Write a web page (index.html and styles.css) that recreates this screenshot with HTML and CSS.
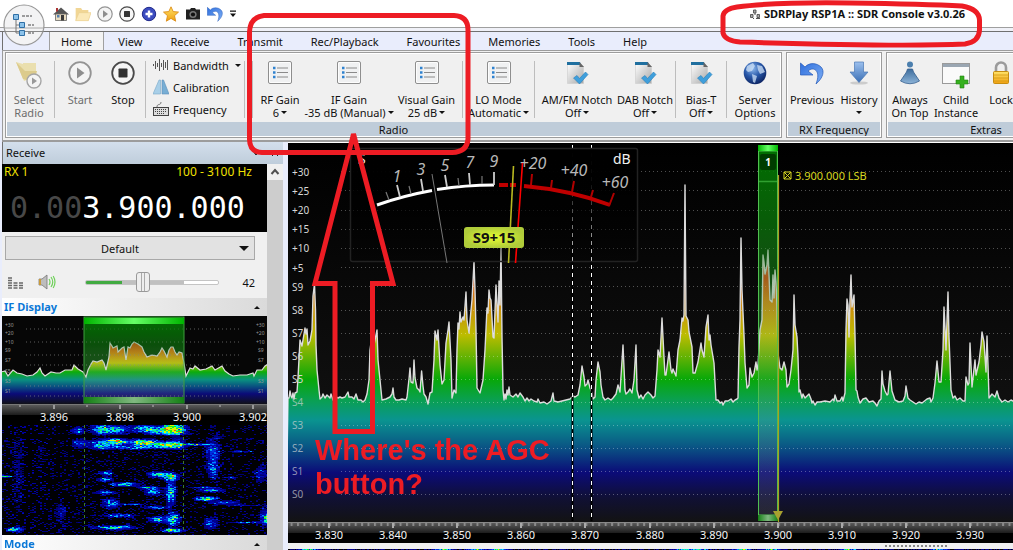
FILE: index.html
```html
<!DOCTYPE html>
<html lang="en">
<head>
<meta charset="utf-8">
<title>SDRPlay RSP1A :: SDR Console v3.0.26</title>
<link rel="stylesheet" href="styles.css">
</head>
<body>
<svg class="defs" width="0" height="0" aria-hidden="true">
  <defs>
    <linearGradient id="paper" x1="0" y1="0" x2="1" y2="1"><stop offset="0" stop-color="#fff"/><stop offset="1" stop-color="#a9a9a9"/></linearGradient>
    <linearGradient id="blueDown" x1="0" y1="0" x2="0" y2="1"><stop offset="0" stop-color="#9cc0ee"/><stop offset="1" stop-color="#3a6fb5"/></linearGradient>
    <linearGradient id="coneBlue" x1="0" y1="0" x2="0" y2="1"><stop offset="0" stop-color="#3d6c9c"/><stop offset="1" stop-color="#8db4d8"/></linearGradient>
    <linearGradient id="undoBlue" x1="0" y1="0" x2="1" y2="1"><stop offset="0" stop-color="#2f6fdd"/><stop offset="1" stop-color="#7fb0f5"/></linearGradient>
    <linearGradient id="gold" x1="0" y1="0" x2="0" y2="1"><stop offset="0" stop-color="#ffe36a"/><stop offset="1" stop-color="#f0a010"/></linearGradient>
    <radialGradient id="globe" cx=".4" cy=".3" r=".75"><stop offset="0" stop-color="#8db9ee"/><stop offset=".5" stop-color="#2757a8"/><stop offset="1" stop-color="#0a1f5c"/></radialGradient>
    <symbol id="i-list" viewBox="0 0 24 24"><rect x=".5" y=".5" width="23" height="22" rx="1.5" fill="#fdfdfd" stroke="#8e8e8e"/><rect x="2" y="2" width="20" height="19" fill="#f0f1f2"/><path d="M9 7h11M9 11.500h11M9 16h11" stroke="#8a8a8a"/><path d="M5 5.800h2.500v2.500H5zM5 10.300h2.500v2.500H5zM5 14.800h2.500v2.500H5z" fill="#2f82cf"/></symbol>
    <symbol id="i-notch" viewBox="0 0 24 24"><path d="M2.500 1.500h12l4 4v17h-16z" fill="url(#paper)" stroke="#ccc" stroke-width=".6"/><path d="M2 1h13l1 3H2z" fill="#1f6f9f"/><path d="M14.500 1v5h4.500z" fill="#666"/><path d="M8.500 17l3.500-2.500 2.500 3 6-6.500 2.500 2.500-8.500 9.500z" fill="#3f9fdc" stroke="#2a7fb8" stroke-width=".6"/></symbol>
    <symbol id="i-play" viewBox="0 0 24 24"><circle cx="12" cy="12" r="10.800" fill="#f4f4f4" stroke="#949494" stroke-width="1.800"/><path d="M9 6.500v11l7.500-5.500z" fill="#8e8e8e"/></symbol>
    <symbol id="i-stop" viewBox="0 0 24 24"><circle cx="12" cy="12" r="10.800" fill="#f6f6f6" stroke="#4a4a4a" stroke-width="1.800"/><rect x="7.500" y="7.500" width="9" height="9" rx=".8" fill="#333"/></symbol>
    <symbol id="i-undo" viewBox="0 0 24 24"><path d="M.500 2v12h12.500l-5-4c6-5 12 0 9 10l-1 3c7-6 9-13 5-17S9.500 1 5 6z" fill="url(#undoBlue)" stroke="#2358b8" stroke-width=".7"/></symbol>
    <symbol id="i-open" viewBox="0 0 24 24"><path d="M1 3h8l2 3h9v4h4l-4 12H1z" fill="#f1d695"/><path d="M1 22l5-12h18l-4 12z" fill="#fbe9b8" stroke="#e8cc8c" stroke-width=".8"/></symbol>
  </defs>
</svg>

<header class="titlebar">
  <nav class="quick" aria-label="Quick access">
    <button aria-label="Home"><svg viewBox="0 0 16 16"><path d="M0 8.500L8 1.500l8 7z" fill="#555"/><path d="M2.500 8h11v6.500h-11z" fill="#e9dcc0" stroke="#666" stroke-width=".8"/><path d="M8 9h3v5.500H8z" fill="#3a3a3a"/><path d="M4 9h2.500v2.500H4z" fill="#527fae"/><path d="M3 2h2v3L3 6z" fill="#a33"/></svg></button>
    <button aria-label="Open"><svg><use href="#i-open"/></svg></button>
    <button aria-label="Start radio"><svg><use href="#i-play"/></svg></button>
    <button aria-label="Stop radio"><svg><use href="#i-stop"/></svg></button>
    <button aria-label="Add"><svg viewBox="0 0 16 16"><circle cx="8" cy="8" r="6.700" fill="#3c4cc0" stroke="#20298a"/><path d="M8 4.500v7M4.500 8h7" stroke="#fff" stroke-width="2.400"/></svg></button>
    <button aria-label="Favourite"><svg viewBox="0 0 16 16"><path d="M8 .8l2.200 4.800 5.300.5-4 3.600 1.200 5.500L8 12.400l-4.700 2.800 1.200-5.500-4-3.600 5.300-.5z" fill="url(#gold)" stroke="#dd8d18" stroke-width=".9"/></svg></button>
    <button aria-label="Snapshot"><svg viewBox="0 0 16 16"><path d="M1 3.500h4l1-1.500h4l1 1.500h4v10H1z" fill="#202020"/><circle cx="8" cy="8.500" r="3.600" fill="#777"/><circle cx="8" cy="8.500" r="2.100" fill="#111"/></svg></button>
    <button aria-label="Undo"><svg><use href="#i-undo"/></svg></button>
    <button class="more" aria-label="Customise"><svg viewBox="0 0 8 8"><path d="M1 .500h6v1.200H1zM1 3.500h6L4 7z" fill="#111"/></svg></button>
  </nav>
  <h1><svg viewBox="0 0 12 12"><path d="M1.500 6.500h2.500v3H1.500zM4.500 2h2.500v3H4.500zM8 6.500h2.500v3H8z" fill="#aaa" stroke="#444" stroke-width=".8"/><path d="M6 5v2M4 10.500h1M7 10.500h4" stroke="#555"/></svg>SDRPlay RSP1A :: SDR Console v3.0.26</h1>
  <button class="appmenu" aria-label="Application menu"><svg viewBox="0 0 42 42"><circle cx="21" cy="21" r="20" fill="#f3f3f4" stroke="#979797" stroke-width="1.200"/><path d="M2 24h38" stroke="#aaa"/><path d="M2 27.500h38" stroke="#888"/><path d="M13 14v15h3M13 21h3" fill="none" stroke="#777"/><path d="M19 12h10M25 21h6M25 29h6" stroke="#444" stroke-dasharray="3 1"/><path d="M10.500 10.500h5v5h-5zM16.500 18.500h5v5h-5zM16.500 26.500h5v5h-5z" fill="#8cc2ea" stroke="#2f6fa5"/></svg></button>
</header>

<div class="window">
  <nav class="tabs" aria-label="Ribbon tabs">
    <button class="active">Home</button><button>View</button><button>Receive</button><button>Transmit</button><button>Rec/Playback</button><button>Favourites</button><button>Memories</button><button>Tools</button><button>Help</button>
  </nav>

  <section class="ribbon">
    <div class="group">
      <div class="items">
        <button class="item w46 off"><svg class="big" viewBox="0 0 28 28"><path d="M1 1l7 2v-1h13v14l-12 4z" fill="#eadfae"/><path d="M1 1l9 9h12l-3 11-11-3z" fill="#dccb8c"/><circle cx="19" cy="20" r="7" fill="#f4f4f4" stroke="#a5a5a5" stroke-width="1.400"/><path d="M17 16.500v7l5-3.500z" fill="#999"/></svg><span>Select</span><span>Radio</span></button>
        <i class="sep"></i>
        <button class="item w46 off"><svg><use href="#i-play"/></svg><span>Start</span></button>
        <button class="item w40"><svg><use href="#i-stop"/></svg><span>Stop</span></button>
        <i class="sep"></i>
        <div class="smalls">
          <button><svg viewBox="0 0 16 16"><path d="M.500 7v2M2.500 4v8M4.500 6v4M6.500 2v12M8.500 6v4M10.500 3v10M12.500 5v6M14.500 3v10" stroke="#555"/></svg>Bandwidth<b class="caret"></b></button>
          <button><svg viewBox="0 0 16 16"><path d="M6 1h1.500v14H0z" fill="#a8cfe8" stroke="#78a8c8" stroke-width=".6"/><path d="M9 1h1.500L16 15H9z" fill="#78aed4" stroke="#5b8fb8" stroke-width=".6"/></svg>Calibration</button>
          <button><svg viewBox="0 0 16 16"><path d="M4 6c0-4 4-1 4-5" fill="none" stroke="#777"/><rect x=".500" y="6.500" width="15" height="8" fill="#ddd" stroke="#444"/><path d="M2 8.500h12M2 10.500h12M4 12.500h8" stroke="#444" stroke-dasharray="1 1"/></svg>Frequency</button>
        </div>
        <i class="sep"></i>
        <i class="sep second"></i>
        <button class="item w50"><svg><use href="#i-list"/></svg><span>RF Gain</span><span>6<b class="caret"></b></span></button>
        <button class="item w88"><svg><use href="#i-list"/></svg><span>IF Gain</span><span>-35 dB (Manual)<b class="caret"></b></span></button>
        <button class="item w67"><svg><use href="#i-list"/></svg><span>Visual Gain</span><span>25 dB<b class="caret"></b></span></button>
        <i class="sep"></i>
        <button class="item w67"><svg><use href="#i-list"/></svg><span>LO Mode</span><span>Automatic<b class="caret"></b></span></button>
        <i class="sep"></i>
        <button class="item w80"><svg><use href="#i-notch"/></svg><span>AM/FM Notch</span><span>Off <b class="caret"></b></span></button>
        <button class="item w56"><svg><use href="#i-notch"/></svg><span>DAB Notch</span><span>Off <b class="caret"></b></span></button>
        <i class="sep"></i>
        <button class="item w46"><svg><use href="#i-notch"/></svg><span>Bias-T</span><span>Off <b class="caret"></b></span></button>
        <i class="sep"></i>
        <button class="item w52"><svg viewBox="0 0 24 24"><circle cx="12" cy="12" r="11.300" fill="url(#globe)"/><path d="M4 5l6-3 2 3-3 5-4 1-2-2zM9 13l5 2-2 7-2-1zM14 4l5 1 3 6-5 2-2-4z" fill="#cfe2f7" opacity=".75"/></svg><span>Server</span><span>Options</span></button>
      </div>
      <div class="caption">Radio</div>
    </div>
    <div class="group">
      <div class="items">
        <button class="item w50"><svg><use href="#i-undo"/></svg><span>Previous</span></button>
        <button class="item w44"><svg viewBox="0 0 24 24"><ellipse cx="12" cy="22" rx="9" ry="1.600" fill="#ccc"/><path d="M7.500 1h9v10H21l-9 10.500L3 11h4.500z" fill="url(#blueDown)" stroke="#4a78b5" stroke-width=".7"/></svg><span>History</span><span><b class="caret"></b></span></button>
      </div>
      <div class="caption">RX Frequency</div>
    </div>
    <div class="group extras">
      <div class="items">
        <button class="item w46"><svg viewBox="0 0 24 24"><circle cx="12" cy="3.500" r="3" fill="#4b7fae"/><path d="M9.500 8h5l1 3 6 9q-9.500 5.500-19 0l6-9z" fill="url(#coneBlue)" stroke="#365f8f" stroke-width=".8"/></svg><span>Always</span><span>On Top</span></button>
        <button class="item w46"><svg class="big" viewBox="0 0 28 28"><rect x=".500" y="2.500" width="27" height="20" fill="#fafafa" stroke="#9a9a9a"/><path d="M1 3h26v3H1z" fill="#9aa6b2"/><path d="M18 15h4v4h4v4h-4v4h-4v-4h-4v-4h4z" fill="#35b01e" stroke="#238410" stroke-width=".6"/></svg><span>Child</span><span>Instance</span></button>
        <button class="item w44"><svg viewBox="0 0 24 24"><path d="M7 11V6.500a5 5 0 0 1 10 0V11" fill="none" stroke="#9b9b9b" stroke-width="2.600"/><rect x="4.500" y="10.500" width="15" height="12" rx="1" fill="url(#gold)" stroke="#c68d10"/><path d="M5 14h14M5 17h14M5 20h14" stroke="#d39a12" stroke-width=".8"/></svg><span>Lock</span></button>
      </div>
      <div class="caption">Extras</div>
    </div>
  </section>

  <main class="work">
    <aside class="dock">
      <h2 class="dockhead">Receive<svg viewBox="0 0 28 8"><path d="M0 2h6L3 6zM19 1l6 6M25 1l-6 6" fill="#222" stroke="#222"/></svg></h2>
      <div class="dockbody">
        <div class="panels">
          <div class="rx">
            <div class="rxinfo"><span>RX 1</span><span>100 - 3100 Hz</span></div>
            <div class="freq"><span>0.00</span>3.900.000</div>
          </div>
          <div class="device"><select aria-label="Audio device"><option>Default</option></select></div>
          <div class="volume">
            <svg viewBox="0 0 16 14"><path d="M0 13h4M0 10.500h4M0 8h4M0 5.500h4M0 3h4M5.500 13h4M5.500 10.500h4M11 13h4M11 10.500h4M11 8h4M5.500 8h4" stroke="#686868" stroke-width="1.600"/></svg>
            <svg class="spk" viewBox="0 0 18 16"><path d="M1 5h3l5-4v14l-5-4H1z" fill="#bdbdbd" stroke="#777" stroke-width=".8"/><path d="M1 5h2v6H1z" fill="#c89a3a"/><path d="M11 5q2 3 0 6M13 3q3.500 5 0 10M15.200 2q3.600 6 0 12" fill="none" stroke="#6fd05a" stroke-width="1.200"/></svg>
            <input type="range" aria-label="Volume" min="0" max="100" value="42"><output>42</output>
          </div>
          <h3>IF Display<b></b></h3>
          <svg class="ifview" viewBox="2 316 265 109" preserveAspectRatio="xMinYMin slice">
            <defs>
              <linearGradient id="heat2" gradientUnits="userSpaceOnUse" x1="0" y1="340" x2="0" y2="404"><stop offset="0" stop-color="#d84010"/><stop offset=".18" stop-color="#d87808"/><stop offset=".36" stop-color="#c4c400"/><stop offset=".5" stop-color="#0cac0c"/><stop offset=".62" stop-color="#0a9080"/><stop offset=".74" stop-color="#0a4880"/><stop offset=".84" stop-color="#0b0b78"/><stop offset="1" stop-color="#111118"/></linearGradient>
              <linearGradient id="lime" x1="0" x2="1" y1="0" y2="0"><stop offset="0" stop-color="#00b400"/><stop offset=".5" stop-color="#66ff66"/><stop offset="1" stop-color="#00b400"/></linearGradient>
              <linearGradient id="limeFoot" x1="0" x2="1" y1="0" y2="0"><stop offset="0" stop-color="#148014"/><stop offset=".5" stop-color="#80b880"/><stop offset="1" stop-color="#148014"/></linearGradient>
              <linearGradient id="band" x1="0" x2="0" y1="0" y2="1"><stop offset="0" stop-color="#007000" stop-opacity=".95"/><stop offset=".2" stop-color="#0a700a" stop-opacity=".6"/><stop offset=".32" stop-color="#207820" stop-opacity=".32"/><stop offset=".5" stop-color="#70a070" stop-opacity=".2"/><stop offset="1" stop-color="#aaa" stop-opacity=".14"/></linearGradient>
              <linearGradient id="ruler" x1="0" x2="0" y1="0" y2="1"><stop offset="0" stop-color="#606060"/><stop offset="1" stop-color="#1c1c1c"/></linearGradient>
            </defs>
            <rect x="0" y="316" width="1200" height="110" fill="#060606"/>
            <path d="M84 317h100v60H84z" fill="#003c00"/>
            <path d="M0 406L1 372L5 371L8 376L13 370L17 373L22 374L27 376L33 375L37 372L40 368L42 373L45 376L51 372L56 373L60 373L65 370L72 370L74 365L78 369L83 372L86 377L88 370L91 364L93 361L97 362L102 360L104 363L106 370L109 357L110 343L112 346L113 348L117 346L118 352L122 348L124 347L126 360L128 347L130 348L132 344L134 342L138 344L142 347L144 352L147 357L152 355L157 356L160 352L162 348L164 351L167 357L169 350L171 347L173 347L175 352L177 355L179 352L182 353L184 363L186 376L190 368L193 369L195 366L200 370L206 369L212 366L215 370L222 366L225 371L229 374L233 376L240 375L247 375L253 373L254 376L257 370L262 370L265 366L268 364V406z" fill="url(#heat2)" stroke="#ddd" stroke-width="1.200"/>
            <g stroke="#8a8a8a" stroke-opacity=".65" stroke-dasharray="1 3"><path d="M26 329h216M26 342h216M26 355h216M26 365h216M26 386h216M26 396h216"/></g>
            <rect x="84" y="317" width="100" height="86" fill="url(#band)" stroke="#3f9f3f"/>
            <rect x="84" y="318" width="100" height="6" fill="url(#lime)"/><rect x="84" y="397" width="100" height="6" fill="url(#limeFoot)"/>
            <g class="tiny"><text x="5" y="327">+30</text><text x="5" y="335">+20</text><text x="5" y="344">+10</text><text x="5" y="352">S9</text><text x="5" y="362">S7</text><text x="5" y="373">S5</text><text x="5" y="383">S3</text><text x="5" y="393">S1</text>
            <text x="256" y="327">+30</text><text x="256" y="335">+20</text><text x="256" y="344">+10</text><text x="258" y="352">S9</text><text x="258" y="362">S7</text><text x="258" y="383">S3</text><text x="258" y="393">S1</text></g>
            <rect x="0" y="404" width="1200" height="21" fill="#000"/><rect x="0" y="404" width="1200" height="11" fill="url(#ruler)"/><path d="M0 404.500h1200" stroke="#777"/>
            <path d="M54 405v4M120 405v4M187 405v4M253 405v4" stroke="#999" stroke-width="2"/><path d="M20 405v2M87 405v2M153 405v2M220 405v2" stroke="#888" stroke-width="2"/>
            <g class="axis"><text x="54" y="421">3.896</text><text x="120" y="421">3.898</text><text x="187" y="421">3.900</text><text x="253" y="421">3.902</text></g>
          </svg>
          <canvas id="fall" width="265" height="110"></canvas>
          <h3>Mode<b></b></h3>
        </div>
        <div class="scroll"><svg viewBox="0 0 16 16"><path d="M4.500 10l3.500-4 3.500 4" fill="none" stroke="#505050" stroke-width="2"/></svg></div>
      </div>
    </aside>

    <section class="scope">
      <svg class="trace" viewBox="288 143 725 400" preserveAspectRatio="xMinYMin slice">
        <defs>
          <linearGradient id="heat" gradientUnits="userSpaceOnUse" x1="0" y1="182" x2="0" y2="522"><stop offset="0" stop-color="#ddd"/><stop offset=".16" stop-color="#e8d0c8"/><stop offset=".28" stop-color="#d84a14"/><stop offset=".35" stop-color="#d08410"/><stop offset=".45" stop-color="#bcbc00"/><stop offset=".58" stop-color="#08a808"/><stop offset=".64" stop-color="#0aa050"/><stop offset=".70" stop-color="#0a9490"/><stop offset=".78" stop-color="#0a5484"/><stop offset=".855" stop-color="#0b0b78"/><stop offset=".93" stop-color="#101034"/><stop offset="1" stop-color="#131313"/></linearGradient>
          <linearGradient id="back" x1="0" x2="0" y1="0" y2="1"><stop offset="0" stop-color="#000"/><stop offset="1" stop-color="#171717"/></linearGradient>
          <linearGradient id="face" x1="0" x2="0" y1="0" y2="1"><stop offset="0" stop-color="#000"/><stop offset=".3" stop-color="#000" stop-opacity=".95"/><stop offset="1" stop-color="#000" stop-opacity=".2"/></linearGradient>
          <radialGradient id="glow"><stop offset="0" stop-color="#e8ff30"/><stop offset="1" stop-color="#b0cc3a"/></radialGradient>
          <pattern id="ticks" patternUnits="userSpaceOnUse" x="290.600" y="522" width="6.410" height="12"><path d="M0 1h2v3H0z" fill="#8a8a8a"/></pattern>
        </defs>
        <rect x="288" y="143" width="3000" height="380" fill="url(#back)"/>
        <path d="M758 151h20v250h-20z" fill="#063c06"/>
        <path d="M286 524L288 398L289 398L290 391L291 396L292 398L293 393L294 399L295 393L297 392L298 378L300 340L302 346L304 334L305 328L306 334L307 329L308 345L310 341L312 330L313 296L314.500 284L315.500 310L316 345L317 370L319 390L320 399L322 397L323 394L325 398L327 395L330 398L331 394L333 400L336 397L338 398L340 397L342 398L345 397L348 392L349 397L352 397L354 399L356 394L358 400L361 400L363 402L365 400L367 394L369 380L370 350L372 335L374 345L377 330L378 360L380 380L382 400L386 399L390 397L392 394L393 388L394 397L396 400L399 400L402 399L406 400L407 397L409 379L410 368L411 382L413 383L414 360L415 378L417 388L419 390L420 392L421.600 371L423 386L424 394L426 397L428 404L430 393L432 392L434 360L435 331L437 340L438 330L440 365L442 384L444 380L446 343L448 330L449 322L451 360L452 398L454 390L456 393L457 350L458 323L459 329L460 312L461 322L463 317L464 320L466 292L467 320L469 333L471 310L472 300L474 262L475 290L476 330L477 388L480 393L483 380L485 350L487 308L488 313L489 290L490 298L491 300L493 337L494 338L496 285L497 305L498 322L499 281L500 305L501 247L502 337L503 390L504 400L505 394L506 399L507 390L508 395L509 387L510 395L513 397L516 394L518 397L520 393L523 397L525 401L527 398L529 401L531 399L534 401L537 402L538 399L540 403L544 402L547 404L551 401L553 393L554 401L558 402L562 401L566 400L570 399L573 396L575 397L578 395L580 385L582 366L584 377L585 386L587 384L588 380L590 388L592 393L593 399L595 397L596 380L598 362L600 372L601 385L603 397L605 400L608 398L611 400L613 398L616 394L618 385L620 392L623 345L625 390L626 394L628 392L630 389L632 393L634 380L636 345L637 390L639 398L641 395L643 399L645 395L648 392L651 395L653 398L655 396L657 370L658 350L660 357L662 318L664 357L665 375L666 375L669 352L671 370L672 373L673 369L676 376L678 350L680 340L682 318L683 321L684 315L685 185L686 316L688 320L689 332L692 347L693 373L695 373L698 362L701 343L702 350L704 357L706 327L708 315L709 340L710 335L711 345L714 363L716 400L718 400L720 403L722 402L723 405L725 401L728 401L731 399L733 402L735 400L737 399L738 398L739 347L740 320L741 238L742 290L744 335L745 363L747 388L749 385L750 368L752 377L754 373L756 362L757 370L758 365L760 330L762 320L763 255L764 262L765 274L767 265L768 250L769 275L770 300L772 302L773 275L774 298L775 270L776 282L777 307L778 353L780 368L782 370L784 362L786 370L787 387L789 384L791 370L793 350L794 295L795 325L797 337L798 357L799 392L800 390L802 398L803 394L805 398L809 394L811 399L812 403L813 401L815 405L817 402L820 402L825 401L830 402L833 399L834 401L835 395L837 401L840 401L842 397L843 401L845 393L846 330L847 299L848 305L849 337L850 300L851 275L852 307L854 295L855 335L856 390L857 391L858 397L860 403L863 399L866 398L869 402L873 401L875 403L877 406L879 401L881 399L882 371L883 384L885 391L887 395L888 394L890 371L892 391L895 400L899 402L903 401L905 396L906 386L908 398L910 400L913 402L916 404L919 402L922 403L927 399L930 398L931 402L933 398L935 383L937 361L939 382L941 382L943 350L944 307L945 327L946 350L948 292L949 337L951 390L953 398L955 396L957 400L960 398L963 401L965 401L966 377L968 385L969 383L970 343L972 387L975 360L976 375L979 362L981 345L982 332L984 342L986 372L987 336L988 365L989 398L992 394L995 397L997 391L999 398L1002 402L1005 400L1008 402L1011 400L1013 401H3300V524z" fill="url(#heat)" stroke="#dcdcdc" stroke-width="1.400" stroke-linejoin="round"/>
        <g stroke="#fff" stroke-opacity=".3" stroke-dasharray="1 3"><path d="M341 171.500h2000M341 190.500h2000M341 210.500h2000M341 229.500h2000M341 248.500h2000M341 267.500h2000M341 286.500h2000M341 310.500h2000M341 333.500h2000M341 356.500h2000M341 379.500h2000M341 402.500h2000M341 425.500h2000M341 448.500h2000M341 471.500h2000M341 494.500h2000"/></g>
        <g class="lev"><text x="292" y="176">+30</text><text x="292" y="195">+25</text><text x="292" y="214">+20</text><text x="292" y="233">+15</text><text x="292" y="252">+10</text><text x="292" y="272">+5</text><text x="292" y="291">S9</text><text x="292" y="314">S8</text><text x="292" y="337">S7</text><text x="292" y="360">S6</text><text x="292" y="383">S5</text><g opacity=".65"><text x="292" y="406">S4</text><text x="292" y="429">S3</text><text x="292" y="452">S2</text><text x="292" y="475">S1</text><text x="292" y="498">S0</text></g></g>
        <path d="M572.500 145v376M591.500 145v376" stroke="#000" stroke-width="2"/>
        <path d="M572.500 145v376M591.500 145v376" stroke="#fff" stroke-dasharray="4 4"/>

        <rect x="350.500" y="148.500" width="287" height="113" rx="2" fill="url(#face)" stroke="#222" stroke-width="1.500"/>
        <path d="M377 205Q402 196 432 190.500M437 189.500Q466 185 494 185" fill="none" stroke="#fff" stroke-width="3"/>
        <path d="M499 185h9M510 185h6M524 186Q570 190 610 205" fill="none" stroke="#c00000" stroke-width="4"/>
        <g stroke="#ccc" stroke-width="1.800"><path d="M400 197l-3-12M423 191l-2-12M447 187l-2-12M470 185l-1-12M494 185v-13"/></g>
        <g stroke="#777" stroke-width="1.200"><path d="M389 200l-3-8M411 194l-2-8M459 186l-1-8M482 184v-8"/></g>
        <g stroke="#b00000" stroke-width="2"><path d="M531 185l1-11M551 188l1-8M572 192l2-11M591 197l2-7M609 206l5-13"/></g>
        <g class="dial"><text x="397" y="182">1</text><text x="421" y="175">3</text><text x="445" y="171">5</text><text x="470" y="168">7</text><text x="494" y="167">9</text><text x="533" y="169">+20</text><text x="574" y="176">+40</text><text x="615" y="188">+60</text></g>
        <text class="unit" x="358" y="164">S</text><text class="unit" x="613" y="164">dB</text>
        <path d="M432 174l15 89" stroke="#777"/><path d="M513.500 166l-5 97" stroke="#b8b820" stroke-width="1.600"/><path d="M522.500 163l-7 100" stroke="#f00" stroke-width="1.600"/>
        <rect x="464" y="227" width="60" height="21" rx="3" fill="url(#glow)"/><text class="badge" x="494" y="243">S9+15</text>

        <rect x="758.500" y="151" width="19" height="364" fill="url(#band)" stroke="#50c050"/>
        <path d="M759 181.500h18" stroke="#30a030" stroke-width="1.500"/>
        <rect x="758" y="145" width="20" height="6" fill="url(#lime)"/><rect x="758" y="515" width="20" height="6" fill="url(#limeFoot)"/>
        <rect x="760" y="154" width="16" height="16" rx="2" fill="#003c00"/><text class="one" x="768" y="166">1</text>
        <path d="M778.500 175v347" stroke="#aaa020" stroke-width="1.200"/><path d="M773 511h10l-5 9z" fill="#a8a030"/>
        <path d="M784 172h7v7h-7zM784 172l7 7M791 172l-7 7" fill="none" stroke="#d8d820"/><text class="lsb" x="795" y="180">3.900.000 LSB</text>

        <rect x="288" y="522" width="3000" height="21" fill="#000"/><rect x="288" y="522" width="3000" height="11" fill="url(#ruler)"/><path d="M288 522.500h3000" stroke="#888"/>
        <rect x="288" y="522" width="3000" height="8" fill="url(#ticks)"/>
        <path d="M329 523v5M393 523v5M457 523v5M521 523v5M585 523v5M650 523v5M714 523v5M778 523v5M842 523v5M906 523v5M970 523v5" stroke="#aaa" stroke-width="2"/>
        <g class="axis"><text x="329" y="539">3.830</text><text x="393" y="539">3.840</text><text x="457" y="539">3.850</text><text x="521" y="539">3.860</text><text x="585" y="539">3.870</text><text x="650" y="539">3.880</text><text x="714" y="539">3.890</text><text x="778" y="539">3.900</text><text x="842" y="539">3.910</text><text x="906" y="539">3.920</text><text x="970" y="539">3.930</text></g>
      </svg>
      <div class="splitter"><i></i></div>
      <canvas id="strip" width="725" height="1"></canvas>
    </section>
  </main>
</div>

<svg class="marks" width="1013" height="550" viewBox="0 0 1013 550" aria-hidden="true" fill="none" stroke="#ed1c24" stroke-linejoin="round">
  <path d="M264 15.500H454Q468 16 468 30V139Q467 152 452 152.500H262Q249 152 249.500 138V32Q250 17 264 15.500z" stroke-width="5"/>
  <path d="M737 7Q775 2 850 3T962 6Q979 9 979.500 20V30Q979 42 965 44Q900 47 740 42Q725 41 723 33V16Q724 9 737 7z" stroke-width="5"/>
  <path d="M353.500 134L315 283.500H335V431.500H372.500V283.500H393z" stroke-width="5" stroke-linejoin="miter" stroke-miterlimit="3"/>
</svg>
<p class="note">Where's the AGC<br>button?</p>
<script src="waterfall.js"></script>
</body>
</html>
```
FILE: styles.css
```css
* { box-sizing: border-box; }
html, body { margin: 0; height: 100%; }
body { position: relative; display: flex; flex-direction: column; overflow: hidden; background: #fff; color: #111; font: 11px/13px "Noto Sans", "Open Sans", sans-serif; }
button { margin: 0; padding: 0; border: 0; background: none; color: inherit; font: inherit; }
svg { display: block; }
.defs { position: absolute; }

.titlebar { position: relative; display: flex; flex: none; justify-content: space-between; align-items: center; height: 27px; padding: 0 48px 0 53px; }
.quick { display: flex; gap: 6px; }
.quick button { width: 16px; height: 16px; }
.quick svg { width: 16px; height: 16px; }
.quick .more { display: flex; align-items: center; width: 8px; }
.quick .more svg { width: 8px; height: 8px; }
h1 { display: flex; gap: 3px; align-items: center; margin: 0; font-size: 11px; line-height: 16px; font-weight: bold; white-space: nowrap; }
h1 svg { width: 12px; height: 12px; }
.appmenu { position: absolute; left: 3px; top: 4px; z-index: 3; width: 42px; height: 42px; }

.window { display: flex; flex: 1; flex-direction: column; min-height: 0; padding-left: 2px; border-top: 1px solid #9f9f9f; background: linear-gradient(#f0f1f8 3px, #707070 3px, #707070 4px, #e9edfc 4px); }
.tabs { display: flex; flex: none; height: 18px; margin-top: 4px; padding-left: 46px; border-left: 1px solid #707070; }
.tabs button { padding: 0 14px; white-space: nowrap; }
.tabs .active { padding: 0 11px; border: solid #a0a0a0; border-width: 0 1px; background: #f3f3f3; }

.ribbon { display: flex; flex: none; gap: 4px; height: 92px; padding: 1px 0 2px 2px; overflow: hidden; border: solid #9c9c9c; border-width: 1px 0 2px 1px; background: #f0f0f0; }
.group { display: flex; flex: none; flex-direction: column; border: 1px solid #9c9c9c; outline: 1px solid #fff; outline-offset: -2px; background: #f0f0f0; }
.extras { width: 200px; }
.items { display: flex; flex: 1; padding-top: 8px; }
.item { display: flex; flex: none; flex-direction: column; align-items: center; white-space: nowrap; }
.item svg { flex: none; width: 24px; height: 24px; margin-bottom: 8px; }
.item svg.big { width: 28px; height: 28px; margin-bottom: 4px; }
.item span { display: flex; align-items: center; height: 13px; gap: 2px; }
.off { color: #6d6d6d; }
.w40 { width: 40px; } .w44 { width: 44px; } .w46 { width: 46px; } .w50 { width: 50px; } .w52 { width: 52px; }
.w56 { width: 56px; } .w67 { width: 67px; } .w80 { width: 80px; } .w88 { width: 88px; }
.sep { flex: none; width: 1px; height: 57px; margin: 0 2px; background: #bdbdbd; }
.second { margin-left: 5px; }
.caret { display: inline-block; border: solid transparent; border-width: 3px 3px 0; border-top-color: #111; }
.smalls { display: flex; flex: none; flex-direction: column; gap: 6px; width: 94px; padding-left: 5px; margin-top: -4px; }
.smalls button { display: flex; align-items: center; gap: 4px; height: 16px; white-space: nowrap; }
.smalls .caret { margin-left: 2px; }
.smalls svg { flex: none; width: 16px; height: 16px; }
.caption { flex: none; height: 15px; margin: 0 1px; padding-top: 1px; background: #bfccd9; text-align: center; }

.work { display: flex; flex: 1; min-height: 0; }
.dock { display: flex; flex: none; flex-direction: column; width: 281px; min-height: 0; }
.dockhead { display: flex; flex: none; justify-content: space-between; align-items: center; height: 22px; margin: 0; padding: 0 2px 0 3px; border-left: 1px solid #707070; background: linear-gradient(#d3dfec, #bfcddb); font-size: 11px; line-height: 20px; font-weight: normal; }
.dockhead svg { width: 28px; height: 8px; }
.dockbody { display: flex; flex: 1; min-height: 0; }
.panels { flex: 1; overflow: hidden; background: #f0f0f0; }
.scroll { width: 16px; background: linear-gradient(#f0f0f0 16px, #cdcdcd 16px); }
.rx { height: 68px; padding: 0 15px 0 2px; background: #000; }
.rxinfo { display: flex; justify-content: space-between; color: #f0e000; font-size: 12px; line-height: 16px; }
.freq { padding: 10px 0 0 6px; color: #fff; font: 30px/36px "DejaVu Sans Mono", monospace; white-space: nowrap; }
.freq span { color: #484848; }
.device { position: relative; padding: 4px 12px 0 3px; }
.device::after { content: ""; position: absolute; right: 18px; top: 14px; border: solid transparent; border-width: 5px 5px 0; border-top-color: #111; }
select { display: block; width: 100%; height: 24px; padding: 0 20px 0 0; border: 1px solid #a8a8a8; border-radius: 0; appearance: none; background: #e2e2e2; color: #111; font: inherit; text-align: center; text-align-last: center; }
.volume { display: flex; align-items: center; height: 38px; padding: 6px 12px 0 6px; }
.volume svg { width: 16px; height: 14px; margin-right: 14px; }
.volume .spk { width: 18px; height: 16px; margin-right: 29px; }
.volume output { margin-left: auto; }
input[type="range"] { width: 134px; height: 22px; margin: 0; appearance: none; background: none; }
input::-webkit-slider-runnable-track { height: 5px; border: 1px solid #c4c4c4; border-radius: 2px; background: linear-gradient(90deg, #42ab42 27%, #c0c0c0 27%, #c0c0c0 74%, #fff 74%); }
input::-webkit-slider-thumb { width: 14px; height: 20px; margin-top: -9px; appearance: none; border: 1px solid #999; border-radius: 3px; background: linear-gradient(90deg, transparent 4px, #aaa 4px, #aaa 5px, transparent 5px, transparent 7px, #aaa 7px, #aaa 8px, transparent 8px), #eee; }
h3 { display: flex; justify-content: space-between; align-items: center; height: 18px; margin: 0; padding: 0 7px 0 2px; background: linear-gradient(90deg, #fff, #dadada); color: #0a78d7; font-size: 11px; line-height: 22px; font-weight: bold; }
h3 b { border: solid transparent; border-width: 0 3px 3px; border-bottom-color: #111; }
.ifview { width: 100%; height: 109px; }
#fall { display: block; width: 100%; height: 110px; image-rendering: pixelated; }

.scope { display: flex; flex: 1; flex-direction: column; min-width: 0; margin-left: 5px; border-top: 1px solid #fff; background: #000; }
.trace { flex: none; width: 100%; height: 400px; }
.splitter { display: flex; flex: none; justify-content: flex-end; height: 6px; padding: 2px 66px 0 0; background: #f0f0f0; }
.splitter i { width: 62px; height: 2px; background: repeating-linear-gradient(90deg, #888 0 2px, transparent 2px 4px); }
#strip { display: block; flex: none; width: 100%; height: 1px; }

svg text { font-family: "Noto Sans", sans-serif; }
.tiny text { fill: #999; font-size: 5px; }
.axis text { fill: #f4f4f4; font-size: 11px; text-anchor: middle; }
.lev text { fill: #d8d8d8; font-size: 10px; }
.dial text { fill: #b8b8b8; font-size: 16px; font-style: italic; text-anchor: middle; }
.unit { fill: #f0f0f0; font-size: 14px; }
.badge { fill: #111; font-size: 15px; font-weight: bold; text-anchor: middle; }
.one { fill: #fff; font-size: 10px; font-weight: bold; text-anchor: middle; }
.lsb { fill: #d8d820; font-size: 11px; }

.marks { position: absolute; left: 0; top: 0; z-index: 4; pointer-events: none; }
.note { position: absolute; left: 315px; top: 433px; z-index: 4; margin: 0; color: #ed1c24; font: bold 29px/34px "Liberation Sans", sans-serif; white-space: nowrap; }
```
FILE: waterfall.js
```js
(function () {
  var seed = 77;
  function rnd() { seed = (seed * 1103515245 + 12345) & 0x7fffffff; return seed / 0x7fffffff; }
  function colour(v) {
    if (v < 0.12) return '#000004';
    if (v < 0.45) return 'rgb(0,' + Math.round(Math.max(0, v - 0.3) * 400) + ',' + Math.round(50 + v * 420) + ')';
    if (v < 0.62) return 'rgb(0,' + Math.round(100 + (v - 0.45) * 900) + ',255)';
    if (v < 0.82) return 'rgb(20,240,' + Math.round(200 - (v - 0.62) * 1000) + ')';
    if (v < 1.05) return '#dcf000';
    return '#ff5000';
  }
  // Each signal is x, y, width, height, strength.
  var signals = [
    [98, 4, 10, 6, .5], [115, 4, 12, 5, .4], [140, 3, 10, 4, .5], [155, 6, 10, 5, .5], [175, 4, 9, 9, .65], [165, 3, 6, 6, .5], [75, 5, 6, 4, .4],
    [114, 16, 9, 3, .85], [140, 17, 12, 3, .95], [162, 19, 10, 3, .7], [175, 20, 9, 4, .5], [98, 19, 10, 5, .5], [132, 22, 30, 2, .45], [77, 18, 8, 5, .35],
    [193, 19, 12, 1, .55], [210, 24, 8, 9, .35], [215, 11, 12, 2, .35], [210, 42, 6, 12, .38], [208, 65, 14, 2, .4], [203, 73, 10, 2, .65], [222, 77, 16, 2, .35], [208, 98, 7, 6, .4], [238, 26, 12, 1, .35],
    [103, 48, 8, 2, .4], [103, 54, 8, 2, .5], [122, 59, 14, 2, .55], [103, 67, 12, 2, .4], [108, 78, 9, 5, .42], [117, 90, 16, 2, .4], [112, 102, 20, 2, .6], [130, 79, 10, 1, .4],
    [154, 49, 9, 3, .5], [168, 51, 8, 4, .6], [168, 68, 5, 12, .55], [150, 66, 8, 4, .45], [154, 94, 9, 3, .5], [170, 94, 7, 6, .6], [170, 105, 10, 2, .7], [153, 82, 10, 2, .35], [145, 62, 12, 1, .4],
    [3, 51, 5, 1, .6], [12, 104, 8, 2, .55], [264, 93, 4, 5, .5], [258, 48, 7, 10, .25], [15, 45, 9, 70, .13], [38, 30, 9, 60, .1], [58, 88, 7, 16, .18], [262, 90, 8, 14, .2],
    [228, 52, 8, 1, .35], [242, 97, 18, 1, .3], [238, 80, 14, 1, .3], [200, 62, 14, 1, .3]
  ];
  var ctx = document.getElementById('fall').getContext('2d');
  for (var y = 0; y < 110; y++) {
    for (var x = 0; x < 265; x += 2) {
      var v = rnd() < 0.16 ? 0.12 + rnd() * 0.12 : 0;
      for (var i = 0; i < signals.length; i++) {
        var s = signals[i], dx = (x - s[0]) / s[2], dy = (y - s[1]) / s[3], d = dx * dx + dy * dy;
        if (d < 3) v += s[4] * Math.exp(-d) * (0.65 + rnd() * 0.9);
      }
      if (y > 9 && y < 13) v *= 0.4;
      ctx.fillStyle = colour(v);
      ctx.fillRect(x, y, 2, 1);
    }
  }
  ctx.fillStyle = '#3a7a2f';
  for (y = 0; y < 107; y += 6) { ctx.fillRect(82, y, 1, 3); ctx.fillRect(181, y, 1, 3); }

  var strip = document.getElementById('strip').getContext('2d');
  var peaks = [20, 155, 187, 210, 395, 412, 453, 483, 560, 650];
  for (x = 0; x < 725; x++) {
    var t = rnd() * 0.25;
    for (i = 0; i < peaks.length; i++) t += Math.exp(-Math.pow((x - peaks[i]) / 8, 2)) * (0.3 + rnd() * 0.5);
    strip.fillStyle = colour(t);
    strip.fillRect(x, 0, 1, 1);
  }
})();
```
